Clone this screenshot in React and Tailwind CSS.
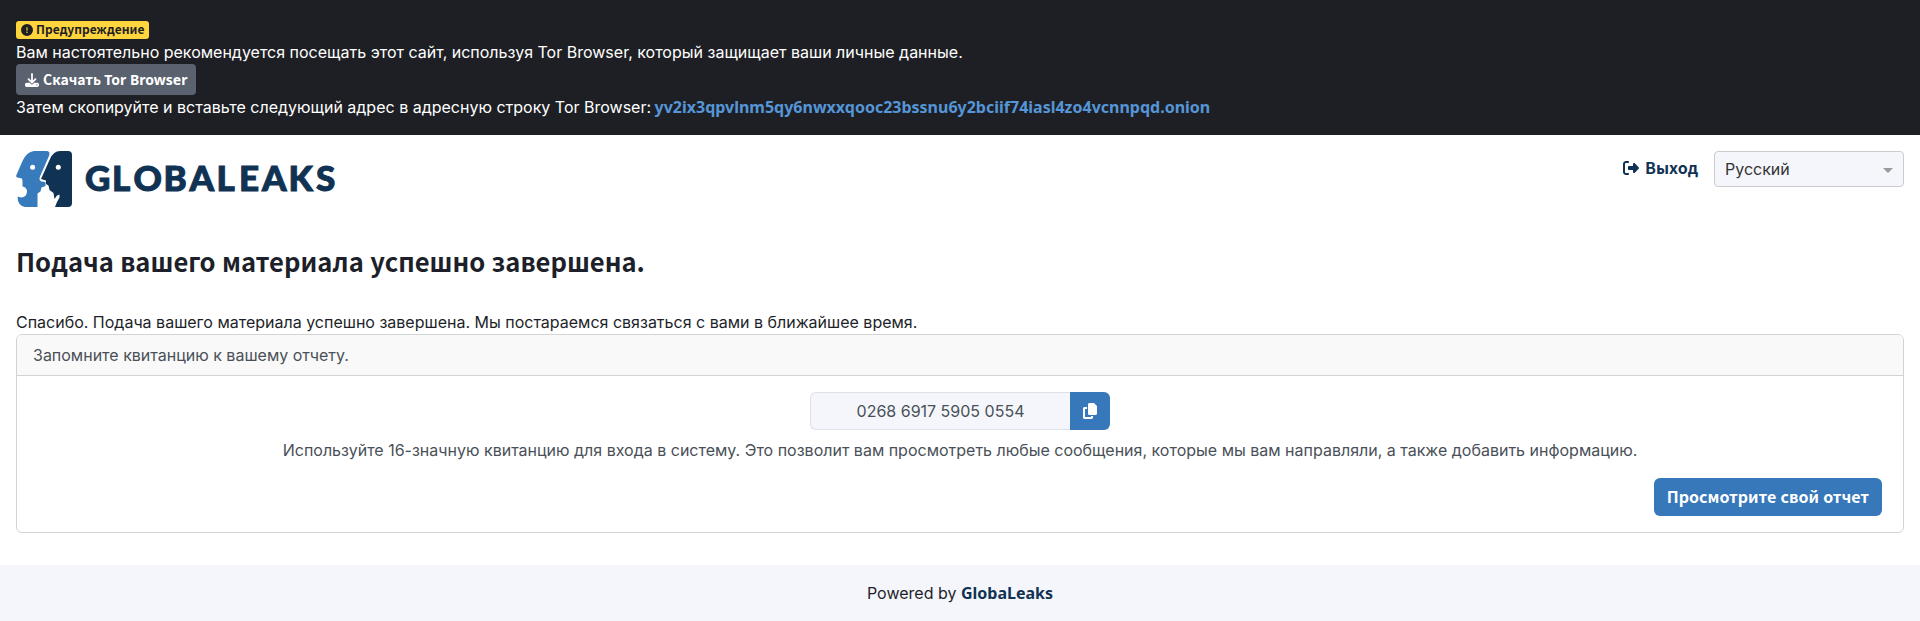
import { FaCircleExclamation, FaDownload, FaRightFromBracket, FaCopy } from "react-icons/fa6";

const strong = "font-['Noto_Sans_CJK_SC','Noto_Sans',sans-serif] font-bold";
const latin = "font-['Noto_Sans',sans-serif] font-bold";

function Logo() {
  return (
    <svg width="324" height="56" viewBox="0 0 324 56" role="img" aria-label="GlobaLeaks">
      <path
        fill="#377bbc"
        d="M18 0H31Q34.6.7 33 5L24 25.500Q22.500 29.500 25.500 30.500L29.500 31V35L25.500 36.500L24.500 40.500L21.500 42.500V56H9Q1.500 54.500 1.500 45.500L5 46.500Q11 46 11 40Q10.500 36 6.500 35.500V30L6 27.500L1 26.500L0 25L6.500 10Q10.500 1 18 0Z"
      />
      <path
        fill="#103253"
        d="M44 0H52Q56 0 56 4V52Q56 56 52 56H39L41 51L43.500 46.500V43.500L41 44.500L38.500 48L37.500 42L33.500 39L32.500 34.500L30 33V29.500L25 28L34 8Q37.500 0 44 0Z"
      />
      <circle cx="16.600" cy="16.200" r="2.500" fill="#fff" />
      <circle cx="42.300" cy="16.200" r="2.500" fill="#fff" />
      <text
        x="69 96 117.5 147.5 173.500 200.500 223 246 272.500 300"
        y="40"
        fill="#103253"
        stroke="#103253"
        strokeWidth="1"
        className="font-['Lato',sans-serif] text-[35px] font-black"
      >
        GLOBALEAKS
      </text>
    </svg>
  );
}

export default function App() {
  return (
    <div className="flex min-h-[621px] flex-col bg-white font-['Inter',sans-serif] text-base leading-6 text-[#1d1f2a]">
      <div className="flex flex-col items-start bg-[#1e1f24] p-4 text-white">
        <div className="flex h-6 items-end pb-px">
          <span className={`${strong} flex h-[18px] items-center gap-[3px] rounded-[3px] bg-[#ffd53e] px-[5px] text-xs leading-4 text-[#1e1f24]`}>
            <FaCircleExclamation className="size-3" />
            <span className="pb-0.5">Предупреждение</span>
          </span>
        </div>
        <div>Вам настоятельно рекомендуется посещать этот сайт, используя Tor Browser, который защищает ваши личные данные.</div>
        <button className={`${strong} flex h-[31px] w-[180px] items-center gap-1 rounded bg-[#5a6270] pl-[9px] text-sm whitespace-nowrap`}>
          <FaDownload className="size-3.5" />
          <span>Скачать <span className={latin}>Tor Browser</span></span>
        </button>
        <div className="h-6 whitespace-nowrap">
          Затем скопируйте и вставьте следующий адрес в адресную строку Tor Browser:{" "}
          <a className={`${latin} -ml-px text-[#5596d8]`}>yv2ix3qpvlnm5qy6nwxxqooc23bssnu6y2bciif74iasl4zo4vcnnpqd.onion</a>
        </div>
      </div>

      <header className="flex items-start justify-between px-4 pt-4">
        <Logo />
        <div className="flex items-start gap-4">
          <a className={`${strong} flex h-[34px] items-center gap-1.5 text-[#103253]`}>
            <FaRightFromBracket className="size-4" />
            <span className="pb-[3px]">Выход</span>
          </a>
          <div className="flex h-9 w-[190px] items-center justify-between rounded border border-[#ccc] bg-[#f5f6fb] px-2.5 text-[#333]">
            Русский
            <span className="mt-[3px] border-x-[5px] border-t-[5px] border-x-transparent border-t-[#999]" />
          </div>
        </div>
      </header>

      <main className="flex flex-col px-4">
        <h1 className={`${strong} mt-[38px] h-[33px] text-[25.6px] leading-[31px] [word-spacing:0.022em]`}>Подача вашего материала успешно завершена.</h1>
        <p className="mt-8">Спасибо. Подача вашего материала успешно завершена. Мы постараемся связаться с вами в ближайшее время.</p>
        <section className="h-[199px] rounded-md border border-[#d2d3d4] text-[#495057]">
          <div className="flex h-[41px] items-center rounded-t-[5px] border-b border-[#d2d3d4] bg-[#f9f9f9] px-4">Запомните квитанцию к вашему отчету.</div>
          <div className="flex flex-col items-center pt-4">
            <div className="flex h-[38px] w-[300px]">
              <div className="flex flex-1 items-center justify-center rounded-l-md border border-r-0 border-[#dce1ea] bg-[#f5f6fb]">0268 6917 5905 0554</div>
              <button className="flex w-10 items-center justify-center rounded-r-md bg-[#3778ba] text-white">
                <FaCopy className="size-4" />
              </button>
            </div>
            <p className="mt-2">Используйте 16-значную квитанцию для входа в систему. Это позволит вам просмотреть любые сообщения, которые мы вам направляли, а также добавить информацию.</p>
            <button className={`${strong} mt-4 mr-[21px] flex h-[38px] w-[228px] items-center justify-center self-end rounded-md bg-[#3778ba] pb-0.5 whitespace-nowrap text-white [word-spacing:0.036em]`}>
              Просмотрите свой отчет
            </button>
          </div>
        </section>
      </main>

      <footer className="mt-8 flex h-14 items-center justify-center bg-[#f5f6fb]">
        <span>Powered by <a className={`${latin} text-[#103253]`}>GlobaLeaks</a></span>
      </footer>
    </div>
  );
}
